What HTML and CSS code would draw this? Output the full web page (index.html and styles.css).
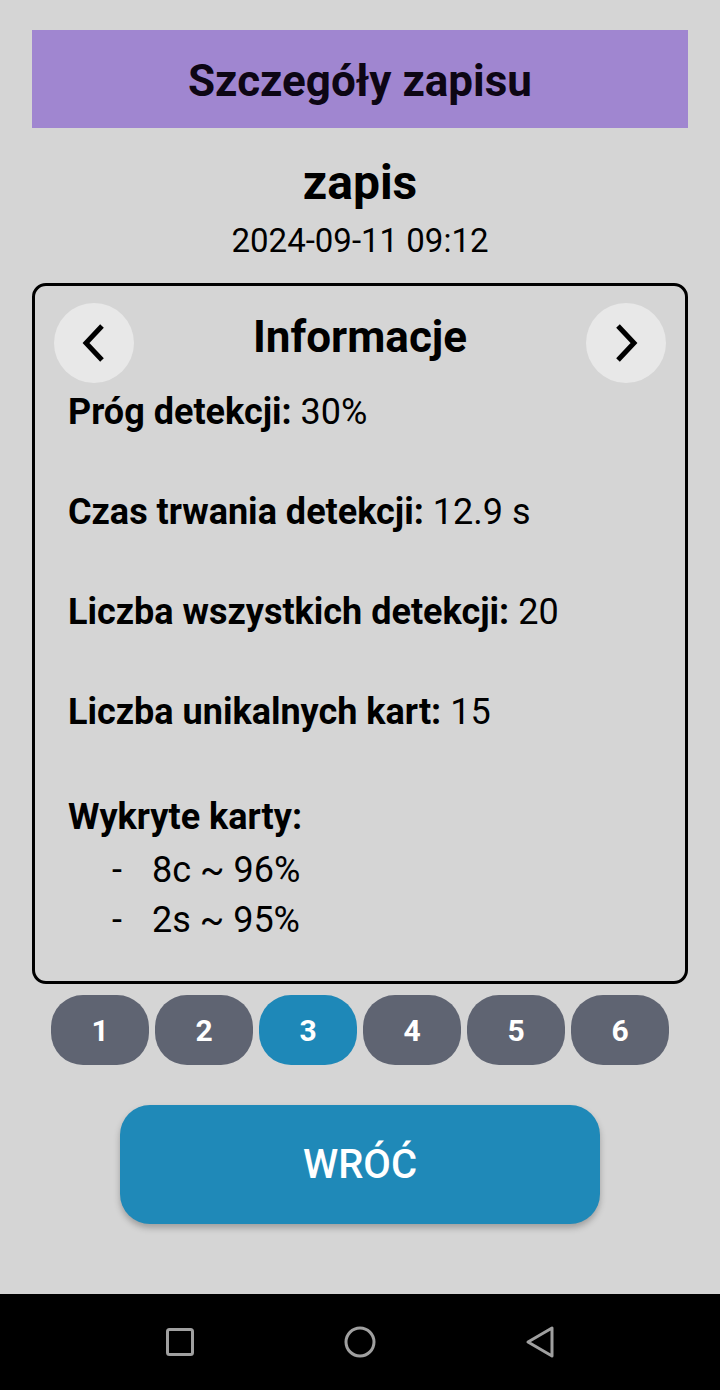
FILE: index.html
```html
<!DOCTYPE html>
<html lang="pl">
<head>
<meta charset="utf-8">
<link rel="stylesheet" href="styles.css">
</head>
<body>
<div class="screen">
  <header class="topbar"><h1>Szczegóły zapisu</h1></header>
  <div class="record-name">zapis</div>
  <div class="record-date">2024-09-11 09:12</div>

  <section class="card">
    <div class="card-head">
      <button class="nav-circle" aria-label="Poprzednia">
        <svg width="26" height="40" viewBox="0 0 26 40"><polyline points="21,3 5,20 21,37" fill="none" stroke="#000" stroke-width="5"/></svg>
      </button>
      <h2>Informacje</h2>
      <button class="nav-circle" aria-label="Następna">
        <svg width="26" height="40" viewBox="0 0 26 40"><polyline points="5,3 21,20 5,37" fill="none" stroke="#000" stroke-width="5"/></svg>
      </button>
    </div>
    <p class="row"><b>Próg detekcji:</b> 30%</p>
    <p class="row"><b>Czas trwania detekcji:</b> 12.9 s</p>
    <p class="row"><b>Liczba wszystkich detekcji:</b> 20</p>
    <p class="row"><b>Liczba unikalnych kart:</b> 15</p>
    <p class="row row-list"><b>Wykryte karty:</b></p>
    <ul class="cards-list">
      <li><span class="dash">-</span>8c ~ 96%</li>
      <li><span class="dash">-</span>2s ~ 95%</li>
    </ul>
  </section>

  <nav class="pages">
    <span class="page">1</span>
    <span class="page">2</span>
    <span class="page active">3</span>
    <span class="page">4</span>
    <span class="page">5</span>
    <span class="page">6</span>
  </nav>

  <button class="back">WRÓĆ</button>

  <footer class="sysbar">
    <span class="sys-item">
      <svg width="30" height="30" viewBox="0 0 30 30"><rect x="2.5" y="2.5" width="25" height="25" rx="2" fill="none" stroke="#a0a0a0" stroke-width="3"/></svg>
    </span>
    <span class="sys-item">
      <svg width="34" height="34" viewBox="0 0 34 34"><circle cx="17" cy="17" r="14" fill="none" stroke="#a0a0a0" stroke-width="3"/></svg>
    </span>
    <span class="sys-item">
      <svg width="30" height="34" viewBox="0 0 30 34"><polygon points="3,17 27,3 27,31" fill="none" stroke="#a0a0a0" stroke-width="3" stroke-linejoin="round"/></svg>
    </span>
  </footer>
</div>
</body>
</html>
```
FILE: styles.css
```css
* { box-sizing: border-box; }
html, body { margin: 0; padding: 0; }
body {
  background: #d5d5d5;
  font-family: Roboto, "Noto Sans", "Liberation Sans", sans-serif;
  color: #000;
}
.screen {
  height: 1390px;
  display: flex;
  flex-direction: column;
  align-items: center;
}
.topbar {
  margin-top: 30px;
  width: 656px;
  height: 98px;
  background: #a086d0;
  display: flex;
  align-items: center;
  justify-content: center;
}
.topbar h1 {
  margin: 4px 0 0;
  font-size: 44px;
  line-height: 50px;
  font-weight: 700;
  color: #0d0614;
}
.record-name {
  margin-top: 27px;
  font-size: 48px;
  font-weight: 700;
  line-height: 56px;
}
.record-date {
  margin-top: 10px;
  font-size: 33px;
  line-height: 40px;
}
.card {
  margin-top: 22px;
  width: 656px;
  border: 3px solid #000;
  border-radius: 14px;
  padding: 17px 19px 36px 33px;
}
.card-head {
  display: flex;
  align-items: center;
  justify-content: space-between;
  margin-left: -14px;
  margin-bottom: 4px;
  height: 80px;
}
.card-head h2 {
  margin: 0 0 12px;
  font-size: 44px;
  line-height: 52px;
  font-weight: 700;
}
.nav-circle {
  width: 80px;
  height: 80px;
  border-radius: 50%;
  border: none;
  background: #e8e8e8;
  padding: 0;
  display: flex;
  align-items: center;
  justify-content: center;
}
.row {
  margin: 0 0 50px;
  font-size: 36px;
  line-height: 50px;
}
.row b { font-weight: 700; }
.row-list {
  padding-top: 5px;
  margin-bottom: 3px;
}
.cards-list {
  list-style: none;
  margin: 0;
  padding: 0 0 0 44px;
  font-size: 36px;
  line-height: 50px;
}
.dash {
  display: inline-block;
  width: 40px;
}
.pages {
  margin-top: 11px;
  display: flex;
  gap: 6px;
}
.page {
  width: 98px;
  height: 70px;
  border-radius: 32px;
  background: #5f6472;
  color: #fff;
  font-size: 30px;
  font-weight: 700;
  display: flex;
  align-items: center;
  justify-content: center;
}
.page.active { background: #1e88b8; }
.back {
  margin-top: 40px;
  width: 480px;
  height: 119px;
  border: none;
  border-radius: 30px;
  background: #1f89b8;
  color: #fff;
  font-family: Roboto, "Noto Sans", "Liberation Sans", sans-serif;
  font-size: 40px;
  font-weight: 500;
  box-shadow: 0 4px 6px rgba(0,0,0,0.25);
}
.sysbar {
  margin-top: auto;
  width: 720px;
  height: 96px;
  background: #000;
  display: flex;
  justify-content: center;
  align-items: center;
}
.sys-item {
  width: 180px;
  display: flex;
  justify-content: center;
  align-items: center;
}
```
